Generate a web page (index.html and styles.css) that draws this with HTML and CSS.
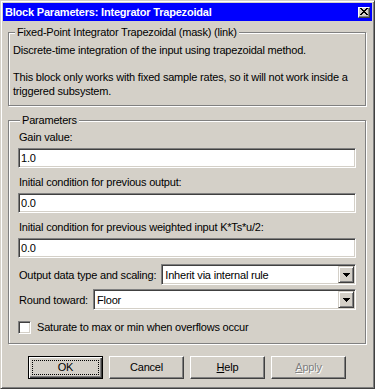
FILE: index.html
```html
<!DOCTYPE html>
<html>
<head>
<meta charset="utf-8">
<link rel="stylesheet" href="styles.css">
</head>
<body>
<div class="window">
  <div class="titlebar">
    <span class="title">Block Parameters: Integrator Trapezoidal</span>
    <span class="close"><svg width="8" height="7" viewBox="0 0 8 7"><path d="M0 0h2v1H0zM6 0h2v1H6zM1 1h2v1H1zM5 1h2v1H5zM2 2h4v1H2zM3 3h2v1H3zM2 4h4v1H2zM1 5h2v1H1zM5 5h2v1H5zM0 6h2v1H0zM6 6h2v1H6z" fill="#000"/></svg></span>
  </div>
  <div class="content">
    <fieldset class="group g1">
      <legend>Fixed-Point Integrator Trapezoidal (mask) (link)</legend>
      <p>Discrete-time integration of the input using trapezoidal method.</p>
      <p class="p2">This block only works with fixed sample rates, so it will not work inside a triggered subsystem.</p>
    </fieldset>
    <fieldset class="group g2">
      <legend>Parameters</legend>
      <div class="lbl first">Gain value:</div>
      <div class="edit">1.0</div>
      <div class="lbl">Initial condition for previous output:</div>
      <div class="edit">0.0</div>
      <div class="lbl">Initial condition for previous weighted input K*Ts*u/2:</div>
      <div class="edit">0.0</div>
      <div class="row r1">
        <span class="rlbl">Output data type and scaling:</span>
        <div class="combo"><span class="ctext">Inherit via internal rule</span><span class="drop"><svg width="7" height="4" viewBox="0 0 7 4"><path d="M0 0h7v1H0zM1 1h5v1H1zM2 2h3v1H2zM3 3h1v1H3z" fill="#000"/></svg></span></div>
      </div>
      <div class="row r2">
        <span class="rlbl">Round toward:</span>
        <div class="combo"><span class="ctext">Floor</span><span class="drop"><svg width="7" height="4" viewBox="0 0 7 4"><path d="M0 0h7v1H0zM1 1h5v1H1zM2 2h3v1H2zM3 3h1v1H3z" fill="#000"/></svg></span></div>
      </div>
      <div class="check"><span class="box"></span><span>Saturate to max or min when overflows occur</span></div>
    </fieldset>
    <div class="buttons">
      <div class="btn default"><span>OK</span></div>
      <div class="btn"><span>Cancel</span></div>
      <div class="btn"><span><u>H</u>elp</span></div>
      <div class="btn disabled"><span><u>A</u>pply</span></div>
    </div>
  </div>
</div>
</body>
</html>
```
FILE: styles.css
```css
* { box-sizing: border-box; }
html, body { margin: 0; padding: 0; }
body {
  width: 375px;
  height: 389px;
  overflow: hidden;
  font-family: "Liberation Sans", Arial, sans-serif;
  font-size: 11px;
  letter-spacing: -0.2px;
  color: #000;
  background: #d4d0c8;
}
.window {
  width: 375px;
  height: 389px;
  background: #d4d0c8;
  border: 1px solid;
  border-color: #d4d0c8 #404040 #404040 #d4d0c8;
  box-shadow: inset 1px 1px #fff, inset -1px -1px #808080;
  padding: 2px;
  display: flex;
  flex-direction: column;
}
.titlebar {
  height: 18px;
  flex: none;
  background: #0000ff;
  display: flex;
  align-items: center;
  padding: 0 2px 0 2px;
}
.title {
  flex: 1;
  color: #fff;
  font-weight: bold;
  white-space: nowrap;
  line-height: 13px;
}
.close {
  width: 12px;
  height: 11px;
  background: #d4d0c8;
  border: 1px solid;
  border-color: #fff #404040 #404040 #fff;
  box-shadow: inset -1px -1px #808080;
  display: flex;
  align-items: center;
  justify-content: center;
  padding-right: 1px;
  padding-bottom: 1px;
}
.close svg { display: block; }
.content {
  flex: 1;
  padding: 5px 6px 0 5px;
  display: flex;
  flex-direction: column;
}
.group {
  margin: 0;
  min-width: 0;
  border: 1px solid #808080;
  box-shadow: inset 1px 1px #fff, 1px 1px #fff;
}
.group legend {
  padding: 0 2px;
  margin-left: 2px;
  line-height: 13px;
  background: #d4d0c8;
}
.g1 { padding: 4px 4px 7px 4px; }
.g1 p { margin: 0; line-height: 14px; }
.g1 .p2 { margin-top: 13px; }
.g2 {
  margin-top: 8px;
  padding: 4px 9px 9px 9px;
}
.lbl {
  line-height: 13px;
  padding-left: 1px;
  margin-top: 8px;
  white-space: nowrap;
}
.lbl.first { margin-top: 0; }
.edit, .combo, .box {
  background: #fff;
  border: 1px solid;
  border-color: #808080 #fff #fff #808080;
  box-shadow: inset 1px 1px #404040, inset -1px -1px #d4d0c8;
}
.edit {
  height: 20px;
  margin-top: 4px;
  display: flex;
  align-items: center;
  padding-left: 2px;
}
.row {
  display: flex;
  align-items: center;
  gap: 5px;
}
.r1 { margin-top: 6px; }
.r2 { margin-top: 4px; }
.rlbl { padding-left: 1px; white-space: nowrap; }
.combo {
  flex: 1;
  height: 21px;
  display: flex;
  align-items: center;
  padding: 1px 1px 1px 3px;
}
.ctext { flex: 1; white-space: nowrap; }
.drop {
  width: 16px;
  height: 17px;
  background: #d4d0c8;
  border: 1px solid;
  border-color: #d4d0c8 #404040 #404040 #d4d0c8;
  box-shadow: inset 1px 1px #fff, inset -1px -1px #808080;
  display: flex;
  align-items: center;
  justify-content: center;
}
.drop svg { display: block; }
.check {
  margin-top: 11px;
  display: flex;
  align-items: center;
  gap: 6px;
  line-height: 13px;
}
.box {
  width: 13px;
  height: 13px;
  flex: none;
}
.buttons {
  margin-top: 12px;
  display: flex;
  justify-content: center;
  gap: 6px;
}
.btn {
  width: 75px;
  height: 23px;
  display: flex;
  align-items: center;
  justify-content: center;
  border: 1px solid;
  border-color: #fff #404040 #404040 #fff;
  box-shadow: inset -1px -1px #808080;
  line-height: 13px;
}
.btn.default {
  border-color: #000;
  box-shadow: inset 1px 1px #fff, inset -1px -1px #404040, inset -2px -2px #808080;
  outline: 1px dotted #000;
  outline-offset: -5px;
}
.btn.disabled {
  color: #808080;
  text-shadow: 1px 1px #fff;
}
```
